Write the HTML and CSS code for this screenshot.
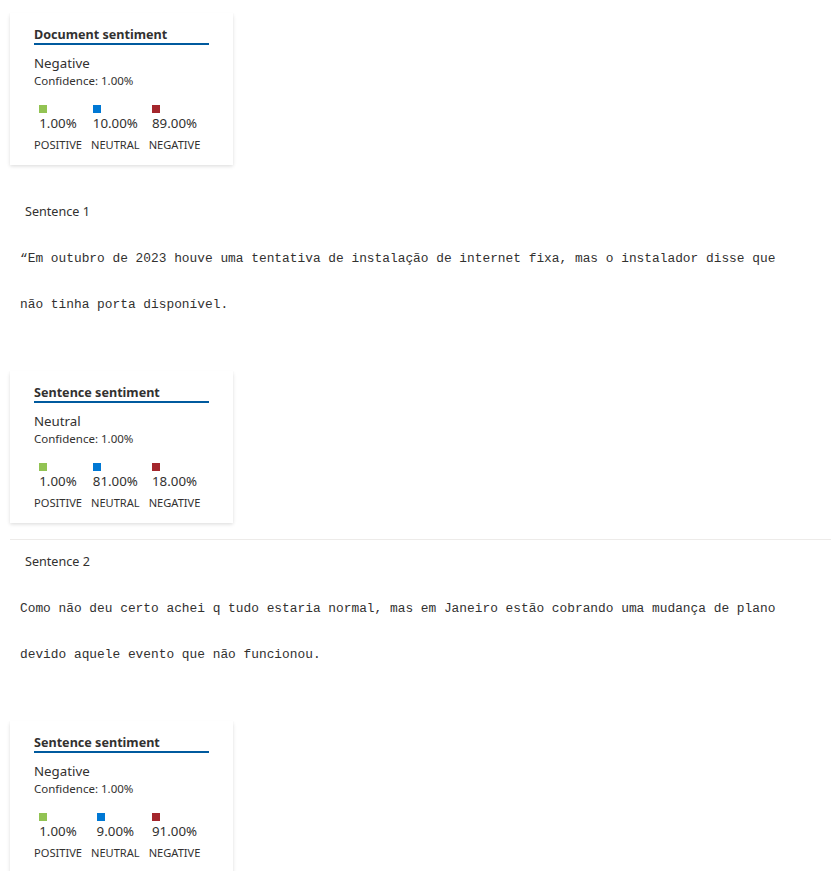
FILE: index.html
```html
<!DOCTYPE html>
<html lang="pt">
<head>
<meta charset="utf-8">
<link rel="stylesheet" href="styles.css">
</head>
<body>
<div class="page">
  <div class="card">
    <div class="card-title">Document sentiment</div>
    <div class="sent">Negative</div>
    <div class="conf">Confidence: 1.00%</div>
    <div class="scores">
      <div class="col"><div class="inner"><span class="sq pos"></span><span class="pct">1.00%</span></div><div class="lbl">POSITIVE</div></div>
      <div class="col"><div class="inner"><span class="sq neu"></span><span class="pct">10.00%</span></div><div class="lbl">NEUTRAL</div></div>
      <div class="col"><div class="inner"><span class="sq neg"></span><span class="pct">89.00%</span></div><div class="lbl">NEGATIVE</div></div>
    </div>
  </div>

  <section class="sentence first">
    <div class="s-label">Sentence 1</div>
    <div class="s-text">“Em outubro de 2023 houve uma tentativa de instalação de internet fixa, mas o instalador disse que não tinha porta disponível.</div>
    <div class="card">
      <div class="card-title">Sentence sentiment</div>
      <div class="sent">Neutral</div>
      <div class="conf">Confidence: 1.00%</div>
      <div class="scores">
        <div class="col"><div class="inner"><span class="sq pos"></span><span class="pct">1.00%</span></div><div class="lbl">POSITIVE</div></div>
        <div class="col"><div class="inner"><span class="sq neu"></span><span class="pct">81.00%</span></div><div class="lbl">NEUTRAL</div></div>
        <div class="col"><div class="inner"><span class="sq neg"></span><span class="pct">18.00%</span></div><div class="lbl">NEGATIVE</div></div>
      </div>
    </div>
  </section>

  <section class="sentence">
    <div class="s-label">Sentence 2</div>
    <div class="s-text">Como não deu certo achei q tudo estaria normal, mas em Janeiro estão cobrando uma mudança de plano devido aquele evento que não funcionou.</div>
    <div class="card">
      <div class="card-title">Sentence sentiment</div>
      <div class="sent">Negative</div>
      <div class="conf">Confidence: 1.00%</div>
      <div class="scores">
        <div class="col"><div class="inner"><span class="sq pos"></span><span class="pct">1.00%</span></div><div class="lbl">POSITIVE</div></div>
        <div class="col"><div class="inner"><span class="sq neu"></span><span class="pct">9.00%</span></div><div class="lbl">NEUTRAL</div></div>
        <div class="col"><div class="inner"><span class="sq neg"></span><span class="pct">91.00%</span></div><div class="lbl">NEGATIVE</div></div>
      </div>
    </div>
  </section>
</div>
</body>
</html>
```

FILE: styles.css
```css
html, body {
  margin: 0;
  padding: 0;
  background: #fff;
}
body {
  font-family: "Segoe UI", "Noto Sans", sans-serif;
  color: #323130;
}
.page {
  padding: 13px 0 0 10px;
}
.card {
  width: 175px;
  padding: 12px 24px 12px 24px;
  background: #fff;
  box-shadow: 0 1.6px 3.6px rgba(0,0,0,0.132), 0 0.3px 0.9px rgba(0,0,0,0.108);
}
.card-title {
  font-size: 12.6px;
  font-weight: 700;
  line-height: 18px;
  padding-top: 1px;
  height: 17px;
  border-bottom: 2px solid #005a9e;
}
.sent {
  margin-top: 8px;
  font-size: 13.3px;
  line-height: 20px;
}
.conf {
  font-size: 11.5px;
  line-height: 16px;
}
.scores {
  display: flex;
  gap: 9px;
  margin-top: 16px;
}
.col {
  display: flex;
  flex-direction: column;
  align-items: center;
}
.inner {
  display: flex;
  flex-direction: column;
  align-items: flex-start;
}
.sq {
  display: block;
  width: 8px;
  height: 8px;
}
.pos { background: #92c353; }
.neu { background: #0078d4; }
.neg { background: #a4262c; }
.pct {
  font-size: 13.3px;
  line-height: 20px;
}
.lbl {
  margin-top: 4px;
  font-size: 11.1px;
  line-height: 16px;
}
.sentence {
  border-top: 1px solid #edebe9;
  margin-top: 16px;
  padding-top: 13px;
}
.sentence.first {
  border-top: 1px solid transparent;
  margin-top: 24px;
}
.s-label {
  padding-left: 15px;
  font-size: 12.6px;
  line-height: 18px;
}
.s-text {
  width: 780px;
  margin-top: 15px;
  padding-left: 10px;
  font-family: "Liberation Mono", monospace;
  font-size: 12.85px;
  line-height: 46px;
  color: #323130;
}
.sentence .card {
  margin-top: 43px;
}
```
